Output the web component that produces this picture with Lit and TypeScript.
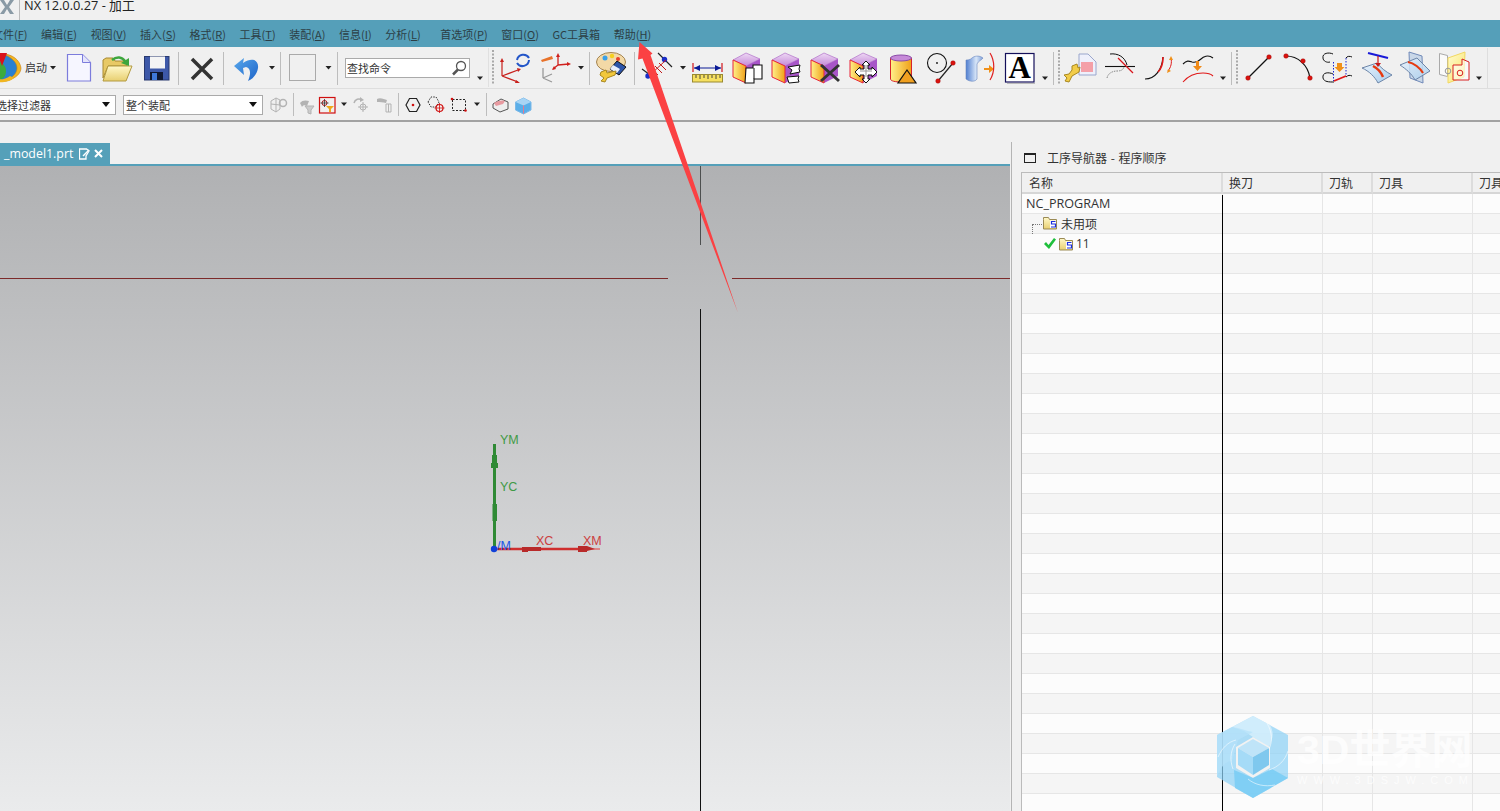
import { LitElement, html, css, svg } from "lit";
import { customElement } from "lit/decorators.js";

const ic = (l: number, r: number, y0: number, h: number, c: unknown) =>
  html`<svg class="ic" width=${r - l} height=${h} viewBox="${l} ${y0} ${r - l} ${h}">${c}</svg>`;
const t1 = (l: number, r: number, c: unknown) => ic(l, r, 47, 41, c);
const t2 = (l: number, r: number, c: unknown) => ic(l, r, 89, 31, c);
const tri = (x: number, y: number) => svg`<path d="M${x - 3} ${y - 1.5}h6l-3 3.500z" fill="#222"/>`;
const drop = (l: number, r: number, y = 67.5) => t1(l, r, tri((l + r) / 2, y));
const sepLine = (x: number, a = 52, b = 85) => svg`<line x1=${x} x2=${x} y1=${a} y2=${b} stroke="#bdbdbd"/>`;
const sep = (l: number, r: number) => t1(l, r, sepLine(Math.floor((l + r) / 2) + 0.5));
const sep2 = (l: number, r: number) => t2(l, r, sepLine(Math.floor((l + r) / 2) + 0.5, 93, 116));
const grip = (l: number, r: number) =>
  t1(l, r, svg`<line x1=${(l + r) / 2} x2=${(l + r) / 2} y1="50" y2="85" stroke="#aaa" stroke-width="2" stroke-dasharray="2 1.5"/>`);

const cube = (dx: number, over: unknown) => svg`<g transform="translate(${dx} 0)">
  <path d="M733 60l13-7 14 6-14 7z" fill="url(#gPurple)" stroke="#b070c8" stroke-width=".7"/>
  <path d="M746 66l14-7v17l-14 7z" fill="#a855c8"/>
  <path d="M733 60l13 6v17l-13-6z" fill="url(#gYellow)" stroke="#e8253a" stroke-width="1"/>
  </g>${over}`;

const dot = (x: number, y: number, r = 2.3) => svg`<circle cx=${x} cy=${y} r=${r} fill="#d9130f" stroke="#900" stroke-width=".4"/>`;
const folder = svg`<path d="M.5 3.5V1.5h5l1 2h7v9.5H.5z" fill="url(#gFolder)" stroke="#9a8a55"/><rect x="7" y="4.5" width="6" height="7.5" fill="#fff"/><path d="M12.5 5.500H8.500v2.500h4v3H8" fill="none" stroke="#1a2ee0" stroke-width="1.200"/>`;

@customElement("app-root")
export class AppRoot extends LitElement {
  static styles = css`
    :host { display: block; position: relative; width: 1500px; height: 811px; overflow: hidden; background: #f0f0f0;
      font-family: "Noto Sans CJK SC", "Noto Sans", sans-serif; font-size: 12px; color: #333; }
    .ic { display: block; flex: none; }
    .defs { position: absolute; width: 0; height: 0; }
    .title { height: 20px; display: flex; align-items: flex-start; overflow: hidden; }
    .title-text { margin: -4px 0 0 4px; font-size: 12.8px; line-height: 18px; color: #222; font-family: "Open Sans", "Noto Sans CJK SC", sans-serif; }
    .menu { height: 27px; background: #559fb9; display: flex; align-items: center; gap: 13.6px; overflow: hidden; font-size: 11px; color: #2c3e45; font-family: "Noto Sans CJK SC", sans-serif; }
    .menu span { flex: none; white-space: nowrap; }
    .menu .first { margin-left: -8px; }
    .menu .wide { margin-left: 6px; }
    .tb1 { height: 41px; display: flex; align-items: stretch; border-bottom: 1px solid #dedede; }
    .start { width: 26px; flex: none; padding-left: 3px; box-sizing: border-box; font-size: 11px; line-height: 41px; white-space: nowrap; }
    .search { flex: none; width: 125px; height: 20px; align-self: center; margin: 0 5px; box-sizing: border-box; border: 1px solid #aaa; background: #fff; display: flex; align-items: center; justify-content: space-between; padding: 0 1px 0 1px; font-size: 11px; }
    .tb2 { height: 31px; display: flex; align-items: stretch; }
    .select { flex: none; height: 20px; align-self: center; box-sizing: border-box; border: 1px solid #aaa; background: #fff; display: flex; align-items: center; justify-content: space-between; padding: 0 5px 0 2px; font-size: 11px; white-space: nowrap; overflow: hidden; }
    .s1 { width: 116px; border-left: 0; padding-left: 0; }
    .s1 span { margin-left: -4px; }
    .s2 { width: 140px; margin-left: 7px; }
    .rule { height: 2px; background: #a2a2a2; }
    .main { height: 689px; display: flex; }
    .left { width: 1010px; flex: none; display: flex; flex-direction: column; padding-top: 21px; box-sizing: border-box; }
    .tab { width: 110px; height: 21px; background: #55a0b9; color: #fff; display: flex; align-items: center; font-size: 12.4px; padding-left: 4px; box-sizing: border-box; font-family: "Open Sans", sans-serif; }
    .tab .name { width: 75px; flex: none; }
    .view { flex: 1; position: relative; border-top: 2px solid #55a0b9; background: linear-gradient(#b0b1b3, #eaebec); overflow: hidden; }
    .cv { position: absolute; left: 0; top: 0; }
    .sash { width: 2px; flex: none; border-left: 1px solid #b4b4b4; box-sizing: border-box; margin: 20px 0 0 1px; }
    .panel { flex: 1; display: flex; flex-direction: column; padding: 21px 0 0 8px; min-width: 0; }
    .phead { height: 29px; display: flex; align-items: center; gap: 11px; padding: 0 0 0 3px; box-sizing: border-box; font-size: 12px; word-spacing: 1px; }
    .pbox { width: 12px; height: 10px; border: 1px solid #222; border-top-width: 2px; box-sizing: border-box; }
    .table { flex: 1; border-left: 1px solid #bbb; border-top: 1px solid #bbb; display: grid; grid-template-columns: 201px 100px 50px 100px 27px; grid-auto-rows: 20px; align-content: start; position: relative; overflow: hidden; }
    .th { height: 21px; background: #f0f0f0; border-bottom: 2px solid #d6d6d6; border-right: 2px solid #dcdcdc; box-sizing: border-box; padding-left: 6px; line-height: 20px; font-size: 12px; white-space: nowrap; overflow: hidden; }
    .th.first { padding-left: 7px; }
    .th.last { border-right: 0; }
    .td { height: 20px; box-sizing: border-box; border-bottom: 1px solid #e6e6e6; border-right: 1px solid #e6e6e6; background: #fcfcfc; display: flex; align-items: center; white-space: nowrap; position: relative; transform: translateY(1px); }
    .td.odd { background: #f5f5f5; }
    .td.last { border-right: 0; }
    .nc { padding-left: 4px; font-family: "Open Sans", sans-serif; font-size: 12.6px; }
    .r1 { padding: 0 0 1px 21px; gap: 4px; }
    .r2 { padding-left: 22px; gap: 3px; font-family: "Open Sans", sans-serif; }
    .vline { position: absolute; left: 200px; top: 22px; bottom: 0; width: 1px; background: #000; }
    .tree { position: absolute; left: 10px; top: 10px; width: 10px; height: 20px; border-left: 1px dotted #777; border-top: 1px dotted #777; border-bottom: 1px dotted #777; box-sizing: border-box; }
    .over { position: absolute; left: 0; top: 0; pointer-events: none; }
    .wm { position: absolute; left: 1297px; top: 727px; color: rgba(255,255,255,.75); font-family: "Liberation Sans", "Noto Sans CJK SC", sans-serif; font-weight: 700; pointer-events: none; }
    .wm .big { font-size: 41px; line-height: 46px; white-space: nowrap; }
    .wm .small { font-size: 11px; line-height: 14px; letter-spacing: 6px; white-space: nowrap; font-weight: 400; }
  `;

  menu() {
    const items: [string, string, string?][] = [
      ["文件", "F", "first"], ["编辑", "E"], ["视图", "V"], ["插入", "S"], ["格式", "R"], ["工具", "T"],
      ["装配", "A"], ["信息", "I"], ["分析", "L"], ["首选项", "P", "wide"], ["窗口", "O"],
    ];
    return html`<div class="menu">
      ${items.map(([a, k, c]) => html`<span class=${c ?? ""}>${a}(<u>${k}</u>)</span>`)}
      <span>GC工具箱</span><span>帮助(<u>H</u>)</span>
    </div>`;
  }

  toolbar1() {
    return html`<div class="tb1">
      ${t1(0, 22, svg`<circle cx="4" cy="68" r="13.500" fill="#2a80d0"/><path d="M-6 62c6-3 12 3 12 9s-4 9-9 9z" fill="#3cab3c"/><path d="M3 54c9 0 17 6 18 14 0 5-5 11-14 12 6-3 10-7 10-12 0-6-6-11-14-14z" fill="#f2b620" stroke="#c77d10" stroke-width=".6"/><path d="M-4 82c6 1 14 0 18-4l-4-2c-4 3-9 4-14 3z" fill="#f2b620"/><path d="M-3 53h10l-5 13z" fill="#d8121b"/>`)}
      <div class="start">启动</div>
      ${drop(48, 58)}
      ${t1(58, 97, svg`<path d="M67.500 54.500h15l8 8v18.500h-23z" fill="#f6f6ff" stroke="#7c7cdc" stroke-width="1.200"/><path d="M82.500 54.500v8h8" fill="#e4e4fa" stroke="#7c7cdc"/>`)}
      ${t1(97, 136, svg`<path d="M103 78V60l3-2h7l2 3h12v5h-19z" fill="#e8c965" stroke="#a88a30"/><path d="M103 81l5-15h24l-6 15z" fill="url(#gFolder)" stroke="#b39a40"/><path d="M112 60c5-4 10-3 13 1" fill="none" stroke="#3da63d" stroke-width="2.500"/><path d="M121 63l8-5v8z" fill="#3da63d"/>`)}
      ${t1(136, 177, svg`<rect x="144.500" y="56.500" width="24.500" height="23.500" fill="#3d58a8" stroke="#28396f"/><rect x="150" y="56.500" width="15" height="12" fill="#f4f4f4"/><rect x="150" y="72" width="13" height="8" fill="#101830"/><rect x="152" y="73" width="5" height="7" fill="#3f78d8"/>`)}
      ${sep(177, 180)}
      ${t1(180, 222, svg`<path d="M192 59l20 20M212 59l-20 20" stroke="#333" stroke-width="3.500"/>`)}
      ${sep(222, 225)}
      ${t1(225, 265, svg`<path d="M234 66l10-8-1 5c9-6 16-3 15 5-1 6-5 11-10 13 3-7 3-13-2-14l-3 1 1 7z" fill="url(#gBlue)"/>`)}
      ${drop(265, 279)}
      ${sep(279, 282)}
      ${t1(282, 322, svg`<rect x="289.500" y="54.500" width="26" height="26" fill="none" stroke="#aaa"/>`)}
      ${drop(322, 335)}
      ${sep(335, 340)}
      <div class="search"><span>查找命令</span><svg class="ic" width="18" height="16" viewBox="0 0 18 16"><circle cx="11" cy="6" r="4.500" fill="#fff" stroke="#555" stroke-width="1.300"/><path d="M8 9.500l-5 5" stroke="#555" stroke-width="2.500"/></svg></div>
      ${drop(475, 485, 78)}
      ${t1(485, 500, svg`<line x1="488.500" x2="488.500" y1="48" y2="87" stroke="#e0e0e0"/><line x1="493" x2="493" y1="50" y2="85" stroke="#aaa" stroke-width="2" stroke-dasharray="2 1.500"/>`)}
      ${t1(500, 536, svg`<path d="M502 76V61M502 76l16-6M502 76l16 6" stroke="#c8201c" stroke-width="1.200" fill="none"/><path d="M502 58l-2 4h4zM521 69l-4-1 1 4zM520 83l-4-3-1 3z" fill="#c8201c"/><path d="M517 60a6.500 6.500 0 0 1 12-2M529 60a6.500 6.500 0 0 1-12 3" fill="none" stroke="#2456c8" stroke-width="2"/>`)}
      ${t1(536, 575, svg`<path d="M541 60l11-4 1 3-11 3z" fill="#e8722a"/><path d="M558 65V55M558 65l11-1M558 65l-5 4" stroke="#d0201c" stroke-width="1.300"/><path d="M558 53l-2 4h4zM571 64l-4-2v4zM552 70l4-1-2-3z" fill="#d0201c"/><path d="M543 78V68M543 78l9-4M543 78l9 4" stroke="#999" stroke-width="1.300"/>`)}
      ${drop(575, 587)}
      ${sep(587, 592)}
      ${t1(592, 632, svg`<ellipse cx="611" cy="62" rx="14.500" ry="9.500" fill="#f3d9a6" stroke="#a38350"/><circle cx="605" cy="58" r="2.500" fill="#3aa0e8"/><circle cx="612" cy="56" r="2.200" fill="#f5d020"/><circle cx="618" cy="59" r="2" fill="#e8402a"/><path d="M617 61l9 6-7 8-9-6z" fill="#2d55a8" stroke="#111"/><path d="M613 65l7 4-3 4-7-4z" fill="#e8eefc"/><path d="M601 72l5-2 1 3 9-2-1 4-8 3-2 4-4-1 3-3-4-3z" fill="#f2c83c" stroke="#a88820"/>`)}
      ${sep(632, 637)}
      ${t1(637, 678, svg`<path d="M658 53l14 14M642 69l15 11" stroke="#222" stroke-width="1.200"/><circle cx="664.500" cy="59.500" r="2.700" fill="#1a2ec8"/><circle cx="648" cy="76" r="2.700" fill="#1a2ec8"/><path d="M650 75l16-15M655 66l7 7M659 63l7 7M652 69l6 6" stroke="#c01818" stroke-width="1"/>`)}
      ${drop(678, 688)}
      ${t1(688, 727, svg`<path d="M693 63v9M722 63v9" stroke="#d0141c" stroke-width="1.200"/><path d="M694 68h27" stroke="#0a1a96" stroke-width="1"/><path d="M694 68l6-3v6zM721 68l-6-3v6z" fill="#0a1a96"/><rect x="692.500" y="74.500" width="30" height="7.500" fill="#f6e060" stroke="#9a8a30"/><path d="M696 75v3M700 75v4M704 75v3M708 75v4M712 75v3M716 75v4M720 75v3" stroke="#223" stroke-width=".8"/>`)}
      ${t1(727, 766, cube(0, svg`<path d="M746 68h7v-3h9v14h-8v4h-9z" fill="#fff" stroke="#111" stroke-width="1.100"/><path d="M754 68v11" stroke="#111"/>`))}
      ${t1(766, 805, cube(39, svg`<path d="M788 67l12-2-1 4 1 3-10 2 2-4zM787 77l12-1-1 3 1 3-10 1-1-3z" fill="#fff" stroke="#111"/>`))}
      ${t1(805, 844, cube(78, svg`<path d="M821 65l18 16M839 65l-18 16" stroke="#333" stroke-width="3"/>`))}
      ${t1(844, 883, cube(117, svg`<path d="M866 61l4 4h-2v4h4v-2l5 5-5 5v-2h-4v4h2l-4 4-4-4h2v-4h-4v2l-5-5 5-5v2h4v-4h-2z" fill="#fff" stroke="#111"/><path d="M866 65v12M860 71h12" stroke="#999"/>`))}
      ${t1(883, 922, svg`<path d="M890.500 58v21c0 2 5 3 10.500 3s10.500-1 10.500-3V58z" fill="url(#gYellow)" stroke="#d8232a"/><ellipse cx="901" cy="58" rx="10.500" ry="3" fill="#c68ad8" stroke="#8a4aa8"/><path d="M907 70l9 13h-18z" fill="#f0a020" stroke="#111" stroke-width="1.200"/>`)}
      ${t1(922, 961, svg`<circle cx="937" cy="63" r="9.500" fill="none" stroke="#111" stroke-width="1.100"/><circle cx="937" cy="63" r=".9" fill="#111"/><path d="M953 63l-15 18" stroke="#222" stroke-width="1.200"/>${dot(953, 63)}${dot(938, 81)}`)}
      ${t1(961, 1000, svg`<path d="M966 60c0 5 0 14 0 19 4 3 9 3 11 0V64c1-3 5-4 6-6-4-3-9-2-11 0-2 2-5 2-6 2z" fill="url(#gCyl)" stroke="#6a86c0" stroke-width=".6"/><path d="M984 68h5v-3l5 4-5 4v-3h-5z" fill="#f09018"/><path d="M990 53c5 8 5 19 0 27" fill="none" stroke="#e02020" stroke-width="1.200"/>`)}
      ${t1(1000, 1040, svg`<rect x="1005.500" y="53.500" width="28.500" height="28.500" fill="#fff" stroke="#14105a" stroke-width="1.200"/><path d="M1007 83h28v1h-28z" fill="#bbb"/><text x="1019.800" y="78" text-anchor="middle" font-family="Liberation Serif" font-weight="700" font-size="31" fill="#000">A</text>`)}
      ${drop(1040, 1050, 78)}
      ${sep(1050, 1056)}
      ${grip(1056, 1062)}
      ${t1(1062, 1100, svg`<path d="M1079 54h9l8 8v13h-17z" fill="#eef0fb" stroke="#9aa6cc"/><rect x="1081" y="62" width="12" height="10" fill="#f4a0a8"/><path d="M1072 66l5-2 1 4 2-1-1 5-7 4-3 6-4-1 2-3-3-3 5-1 3-4z" fill="#f2cc48" stroke="#a88820"/>`)}
      ${t1(1100, 1140, svg`<path d="M1105 66.500h30" stroke="#111" stroke-width="1.100"/><path d="M1110 54c8-1 15 3 17 11" fill="none" stroke="#111" stroke-width="1"/><path d="M1118 58l15 15" stroke="#d9141c" stroke-width="1.200"/><path d="M1107 78c1-5 6-7 10-7s6-1 7-4" fill="none" stroke="#888" stroke-dasharray="1.500 1"/>`)}
      ${t1(1140, 1176, svg`<path d="M1145 79c10 0 17-9 18-22" fill="none" stroke="#111" stroke-width="1.200"/><path d="M1158 72c4-4 5-10 5-15" fill="none" stroke="#e01818" stroke-width="1.600"/><path d="M1171 58c1 5 0 9-3 13" fill="none" stroke="#e01818"/><path d="M1171 56l-2 4h4zM1167 73l4-2-3-2z" fill="#f09018"/>`)}
      ${t1(1176, 1217, svg`<path d="M1183 64c4-4 6-3 9-2 4 1 7-1 9-3s7-5 12-1" fill="none" stroke="#111" stroke-width="1.100"/><path d="M1196 61h3v5h3l-4.500 5-4.500-5h3z" fill="#f08a18"/><path d="M1183 82c5-6 13-9 20-9 4 0 8 1 10 3" fill="none" stroke="#e01818" stroke-width="1.100"/>`)}
      ${drop(1217, 1229, 78)}
      ${sep(1229, 1234)}
      ${grip(1234, 1240)}
      ${t1(1240, 1278, svg`<path d="M1248 78l21-21" stroke="#111" stroke-width="1.200"/>${dot(1248, 78)}${dot(1269, 57)}`)}
      ${t1(1278, 1316, svg`<path d="M1286 56c12 0 22 9 24 22" fill="none" stroke="#111" stroke-width="1.200"/>${dot(1286, 56)}${dot(1303, 61)}${dot(1310, 78)}`)}
      ${t1(1316, 1358, svg`<path d="M1333 54c-4-2-11-1-10 4 0 3 4 5 7 4M1333 74c-4-2-11-2-10 4 1 4 6 4 11 4M1346 58c1-2 4-2 6-1M1346 77c2-2 4-2 6-1" fill="none" stroke="#111" stroke-width="1"/><path d="M1333.500 62v19M1346 58v18" stroke="#1a24d0" stroke-dasharray="1.500 1.500"/><path d="M1334 81l12-5" stroke="#e01818" stroke-width="1.800"/><path d="M1337 63h5v4h2.500l-5 5-5-5h2.500z" fill="#f09018"/>`)}
      ${t1(1358, 1396, svg`<path d="M1362 68l15-5c4 5 9 9 15 12l-14 8c-3-6-9-12-16-15z" fill="url(#gSurf)" stroke="#6d85a8"/><path d="M1368 53l20 5" stroke="#1a1ad8" stroke-width="2"/><path d="M1378 56v9" stroke="#c81818" stroke-width="1.200"/><path d="M1375 63h6l-3 4z" fill="#c81818"/><path d="M1373 66c4 2 8 6 10 11" fill="none" stroke="#e63a10" stroke-width="2.500"/>`)}
      ${t1(1396, 1436, svg`<path d="M1409 52l13 4 1 27-13-5z" fill="#c9d7e8" stroke="#7089b8"/><path d="M1400 65l17-7 13 13-15 9c-3-6-9-11-15-15z" fill="url(#gSurf)" fill-opacity=".85" stroke="#6d85a8"/><path d="M1408 62c6 1 12 6 15 11" fill="none" stroke="#e63a10" stroke-width="2.200"/>`)}
      ${t1(1436, 1474, svg`<path d="M1439.500 53.500l8 2v21l-8-2z" fill="#fafafa" stroke="#aaa"/><path d="M1448 58l17-6-1 25-16 6z" fill="url(#gPage)" stroke="#f2d860"/><path d="M1453 65h9v-6l7 3v18h-16z" fill="#fff" fill-opacity=".6" stroke="#d82020"/><circle cx="1460" cy="73" r="2.800" fill="none" stroke="#d82020"/><circle cx="1448" cy="71" r="2.800" fill="none" stroke="#999"/>`)}
      ${drop(1474, 1484, 78)}
      ${t1(1484, 1488, svg`<line x1="1487.500" x2="1487.500" y1="48" y2="88" stroke="#dedede"/>`)}
    </div>`;
  }

  toolbar2() {
    const g = "#b3b3b3";
    return html`<div class="tb2">
      <div class="select s1"><span>选择过滤器</span><svg class="ic" width="8" height="5"><path d="M0 0h8l-4 5z" fill="#111"/></svg></div>
      <div class="select s2"><span>整个装配</span><svg class="ic" width="8" height="5"><path d="M0 0h8l-4 5z" fill="#111"/></svg></div>
      ${t2(263, 291, svg`<path d="M271 101l5-3 4 2v9l-4 3-5-3zM276 98v14M271 104l9 1" fill="none" stroke=${g}/><circle cx="283" cy="103" r="3.500" fill="none" stroke=${g} stroke-width="1.500"/>`)}
      ${sep2(291, 295)}
      ${t2(295, 317, svg`<path d="M300 103c2-3 6-3 9-2l-2 5c-2-1-4-1-5 1z" fill=${g}/><path d="M305 106h9l-3 4v4l-3-1v-3z" fill="#ccc" stroke=${g}/>`)}
      ${t2(317, 338, svg`<rect x="319.500" y="97.500" width="15.500" height="15.500" fill="none" stroke="#d01010" stroke-width="1.200"/><circle cx="324.500" cy="103" r="2.500" fill="none" stroke="#b01818"/><path d="M324.500 99v8M320.500 103h8" stroke="#333" stroke-width=".8"/><path d="M326 106h8l-3 3v3h-2v-3z" fill="#f0a818"/>`)}
      ${t2(338, 350, tri(344, 104))}
      ${t2(350, 372, svg`<path d="M354 103c1-4 5-5 8-3" fill="none" stroke=${g} stroke-width="1.500"/><path d="M360 97l4 3-4 2z" fill=${g}/><circle cx="363" cy="107" r="3" fill="none" stroke=${g}/><path d="M363 102v10M358 107h10" stroke=${g}/>`)}
      ${t2(372, 395, svg`<path d="M377 99c3-2 7 0 10 1l-1 3c-3-1-6-1-9-1z" fill=${g}/><path d="M386 104h5v8h-5zM388.500 104v8" fill="none" stroke=${g}/>`)}
      ${sep2(395, 401)}
      ${t2(401, 424, svg`<path d="M406 105l3.500-6.500h7l3.500 6.500-3.500 6.500h-7z" fill="none" stroke="#222" stroke-width="1.200"/><circle cx="413" cy="105" r="1.300" fill="#d01010"/>`)}
      ${t2(424, 447, svg`<path d="M428 102l3-5h5l3 5-3 5h-5z" fill="none" stroke="#333" stroke-dasharray="1.500 1.200"/><circle cx="439.500" cy="108" r="3.500" fill="none" stroke="#d01010" stroke-width="1.200"/><path d="M439.500 103v10M434.500 108h10" stroke="#d01010" stroke-width=".8"/>`)}
      ${t2(447, 470, svg`<rect x="452.500" y="99.500" width="13" height="11" fill="none" stroke="#222" stroke-dasharray="2 1.500"/><circle cx="452" cy="99" r="1.300" fill="#d01010"/><circle cx="465.500" cy="110.500" r="1.300" fill="#d01010"/>`)}
      ${t2(470, 483, tri(477, 104))}
      ${sep2(483, 489)}
      ${t2(489, 511, svg`<path d="M493 104l8-5 7 3v7l-8 3-7-4z" fill="#eee" stroke="#555"/><path d="M494 103c3-2 8-3 11-2l-2 3-7 2z" fill="#e89aa0"/>`)}
      ${t2(511, 534, svg`<path d="M515.500 102l8-4 7.500 4v8l-7.500 4-8-4z" fill="#5aaee8" stroke="#7ab8e8"/><path d="M515.500 102l8 3.500 7.500-3.500-7.500-4z" fill="#a8d4f4"/><path d="M523.500 105.500v8" stroke="#e87890"/>`)}
    </div>`;
  }

  viewport() {
    return html`<div class="view">
      <svg class="cv" width="1010" height="645" viewBox="0 166 1010 645">
        <path d="M0 278.500h668M732 278.500h278" stroke="#7c2a2a"/>
        <path d="M700.500 166v79" stroke="#4d4f4f"/>
        <path d="M700.500 309v502" stroke="#111"/>
        <path d="M494.500 444v105" stroke="#2f8a35" stroke-width="3"/>
        <path d="M494.500 444v12" stroke="#2f8a35" stroke-width="1"/>
        <path d="M492 455h5v8h1v5h-7v-5h1zM492.500 504h4.500v17h-4.500z" fill="#2f8a35"/>
        <path d="M495 549h93" stroke="#cf2e2e" stroke-width="2.500"/>
        <path d="M588 549h12" stroke="#e83a3a"/>
        <path d="M522 547h19v4h-13v1h-6zM578 546h9l8 3-8 2v1h-9z" fill="#b82a2a"/>
        <circle cx="494" cy="549" r="3.200" fill="#1040d8"/>
        <g font-family="Liberation Sans" font-size="12.500">
          <text x="500" y="444" fill="#3f9a45">YM</text>
          <text x="500" y="491" fill="#3f9a45">YC</text>
          <text x="536" y="545" fill="#cc4040">XC</text>
          <text x="583" y="545" fill="#cc4040">XM</text>
          <text x="497" y="549.500" fill="#1a55e8">/M</text>
        </g>
      </svg>
    </div>`;
  }

  table() {
    const rows = Array.from({ length: 31 }, (_, i) => i);
    const heads = ["名称", "换刀", "刀轨", "刀具", "刀具"];
    return html`<div class="table">
      ${heads.map((h, i) => html`<div class="th ${i === 4 ? "last" : ""} ${i === 0 ? "first" : ""}">${h}</div>`)}
      ${rows.map((n) => {
        const odd = n % 2 ? "odd" : "";
        let first = html``;
        let cls = "";
        if (n === 0) { first = html`NC_PROGRAM`; cls = "nc"; }
        if (n === 1) {
          cls = "r1";
          first = html`<svg class="ic" width="14" height="14" viewBox="0 0 14 14">${folder}</svg>未用项<div class="tree"></div>`;
        }
        if (n === 2) {
          cls = "r2";
          first = html`<svg class="ic" width="12" height="12" viewBox="0 0 12 12"><path d="M0 6l2-2 2.500 3L10 0l2 1.500L5 11z" fill="#1fbf3c"/></svg><svg class="ic" width="14" height="14" viewBox="0 0 14 14">${folder}</svg>11`;
        }
        return html`<div class="td ${odd} ${cls}">${first}</div>
          <div class="td ${odd}"></div><div class="td ${odd}"></div><div class="td ${odd}"></div><div class="td last ${odd}"></div>`;
      })}
      <div class="vline"></div>
    </div>`;
  }

  render() {
    return html`
      <svg class="defs"><defs>
        <linearGradient id="gPurple" x1="0" y1="0" x2="0" y2="1"><stop offset="0" stop-color="#eed8f4"/><stop offset="1" stop-color="#c48ad8"/></linearGradient>
        <linearGradient id="gYellow" x1="0" y1="0" x2="1" y2="0"><stop offset="0" stop-color="#fff08a"/><stop offset="1" stop-color="#f0a018"/></linearGradient>
        <linearGradient id="gFolder" x1="0" y1="0" x2="0" y2="1"><stop offset="0" stop-color="#fff8c8"/><stop offset="1" stop-color="#e8cf70"/></linearGradient>
        <linearGradient id="gBlue" x1="0" y1="0" x2="1" y2="1"><stop offset="0" stop-color="#58a8ec"/><stop offset="1" stop-color="#1e64c8"/></linearGradient>
        <linearGradient id="gCyl" x1="0" y1="0" x2="1" y2="0"><stop offset="0" stop-color="#4f7ed0"/><stop offset=".6" stop-color="#d8e6f8"/><stop offset="1" stop-color="#7ea0d8"/></linearGradient>
        <linearGradient id="gSurf" x1="0" y1="0" x2="1" y2="1"><stop offset="0" stop-color="#e8f2fc"/><stop offset="1" stop-color="#a8cdec"/></linearGradient>
        <linearGradient id="gPage" x1="0" y1="0" x2="1" y2="1"><stop offset="0" stop-color="#fffbd0"/><stop offset="1" stop-color="#f8e468"/></linearGradient>
      </defs></svg>
      <div class="title">
        <svg class="ic" width="20" height="20" viewBox="0 0 20 20"><path d="M0 0h4l3 5 3-5h4L9 7l5 7h-4L7 9l-3 5H0l5-7z" fill="#8a9aa5"/><path d="M19.500 0v20" stroke="#bbb"/></svg>
        <div class="title-text">NX 12.0.0.27 - 加工</div>
      </div>
      ${this.menu()}
      ${this.toolbar1()}
      ${this.toolbar2()}
      <div class="rule"></div>
      <div class="main">
        <div class="left">
          <div class="tab"><span class="name">_model1.prt</span>
            <svg class="ic" width="24" height="12" viewBox="0 0 24 12"><path d="M.5 1h7l2.500 2-3 5V11H.5z" fill="none" stroke="#fff" stroke-width="1.300"/><path d="M4 8l6-6" stroke="#fff" stroke-width="1.500"/><path d="M16 2l7 7M23 2l-7 7" stroke="#fff" stroke-width="2"/></svg>
          </div>
          ${this.viewport()}
        </div>
        <div class="sash"></div>
        <div class="panel">
          <div class="phead"><span class="pbox"></span>工序导航器 - 程序顺序</div>
          ${this.table()}
        </div>
      </div>
      <svg class="over" width="1500" height="811" viewBox="0 0 1500 811">
        <path d="M639.500 42l13 11.500-2 1.500L738 313 642.500 58.500l-4.500 1z" fill="#fb4143"/>
        <g>
          <path d="M1253 716l35 19v43l-35 20-36-21v-42z" fill="#8fd3f6" fill-opacity=".72"/>
          <path d="M1232 727l21-11 17 9c5 9 2 15-1 22l-16-10-9-6z" fill="#d8f0fc" fill-opacity=".8"/>
          <path d="M1217 735l15-8c8 1 14 4 21 5l-15 8-6 21c-6 0-11 5-15 16z" fill="#b6e2fa" fill-opacity=".75"/>
          <path d="M1253 737l17 10v21l-17 10-17-10v-21z" fill="#f2f2f2"/>
          <path d="M1253 739l16 9-16 9-15-9z" fill="#bfe4f8"/>
          <path d="M1238 748l15 9v18l-15-10z" fill="#a5dbf7"/>
          <path d="M1269 748l-16 9v18l16-10z" fill="#7fc8ee"/>
          <path d="M1234 770l19 8 19-9 16 9-35 20-18-10z" fill="#78ccf4" fill-opacity=".85"/>
          <path d="M1267 723c5 9 6 18 2 26M1288 751c-3 10-10 16-19 19M1275 785c-10 2-20 0-27-6M1233 769c-3-8-3-17 2-25M1218 757c4-9 10-15 18-17" fill="none" stroke="#fff" stroke-opacity=".7" stroke-width=".8"/>
        </g>
      </svg>
      <div class="wm"><div class="big">3D世界网</div><div class="small">WWW.3DSJW.COM</div></div>
    `;
  }
}
